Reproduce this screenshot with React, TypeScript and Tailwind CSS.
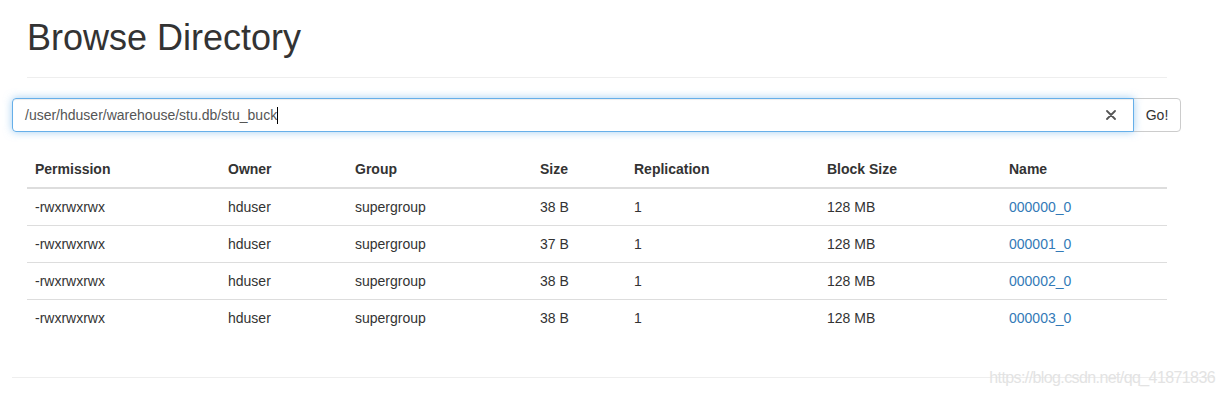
const rows = [
  { perm: "-rwxrwxrwx", owner: "hduser", group: "supergroup", size: "38 B", repl: "1", block: "128 MB", name: "000000_0" },
  { perm: "-rwxrwxrwx", owner: "hduser", group: "supergroup", size: "37 B", repl: "1", block: "128 MB", name: "000001_0" },
  { perm: "-rwxrwxrwx", owner: "hduser", group: "supergroup", size: "38 B", repl: "1", block: "128 MB", name: "000002_0" },
  { perm: "-rwxrwxrwx", owner: "hduser", group: "supergroup", size: "38 B", repl: "1", block: "128 MB", name: "000003_0" },
];

const cols = ["w-[193px]", "w-[127px]", "w-[185px]", "w-[94px]", "w-[193px]", "w-[182px]", "w-[166px]"];
const heads = ["Permission", "Owner", "Group", "Size", "Replication", "Block Size", "Name"];

export default function App() {
  return (
    <div className="w-[1225px] h-[395px] bg-white text-[#333] text-[14px] leading-[20px] font-['Liberation_Sans',Arial,sans-serif] overflow-hidden">
      <div className="pl-[12px] pr-[10px]">
        <div className="px-[15px]">
          <h1 className="pt-[18px] h-[78px] text-[36px] leading-[39.6px] font-medium text-[#333] border-b border-[#eee] w-[1140px]">
            Browse Directory
          </h1>
        </div>

        <div className="mt-[20px] flex w-[1169px] h-[34px]">
          <div className="flex-1 flex items-center border border-[#66afe9] rounded-l-[4px] shadow-[inset_0_1px_1px_rgba(0,0,0,0.075),0_0_8px_rgba(102,175,233,0.6)] pl-[12px] pr-[17px] text-[#555] relative z-10">
            <span className="flex-1 flex items-center">
              /user/hduser/warehouse/stu.db/stu_buck
              <span className="inline-block w-px h-[17px] bg-black" />
            </span>
            <svg width="10" height="10" viewBox="0 0 10 10" className="shrink-0">
              <path d="M1 1L9 9M9 1L1 9" stroke="#555" strokeWidth="1.8" strokeLinecap="round" />
            </svg>
          </div>
          <button className="w-[48px] -ml-px border border-[#ccc] rounded-r-[4px] bg-white text-[#333] text-[14px]">
            Go!
          </button>
        </div>

        <div className="px-[15px] mt-[19px]">
          <table className="w-[1140px] border-collapse table-fixed">
            <thead>
              <tr>
                {heads.map((h, i) => (
                  <th key={h} className={`${cols[i]} text-left font-bold px-[8px] py-[8px] border-b-2 border-[#ddd]`}>
                    {h}
                  </th>
                ))}
              </tr>
            </thead>
            <tbody>
              {rows.map((r, idx) => (
                <tr key={r.name} className={idx > 0 ? "border-t border-[#ddd]" : ""}>
                  <td className="px-[8px] py-[8px]">{r.perm}</td>
                  <td className="px-[8px] py-[8px]">{r.owner}</td>
                  <td className="px-[8px] py-[8px]">{r.group}</td>
                  <td className="px-[8px] py-[8px]">{r.size}</td>
                  <td className="px-[8px] py-[8px]">{r.repl}</td>
                  <td className="px-[8px] py-[8px]">{r.block}</td>
                  <td className="px-[8px] py-[8px]">
                    <a className="text-[#337ab7]">{r.name}</a>
                  </td>
                </tr>
              ))}
            </tbody>
          </table>
        </div>

        <div className="mt-[41px] w-[1203px] border-t border-[#eee] relative">
          <span className="absolute right-[0px] -top-[10px] text-[16px] leading-[20px] text-[#e3e3e3] tracking-[-0.6px]">
            https://blog.csdn.net/qq_41871836
          </span>
        </div>
      </div>
    </div>
  );
}
